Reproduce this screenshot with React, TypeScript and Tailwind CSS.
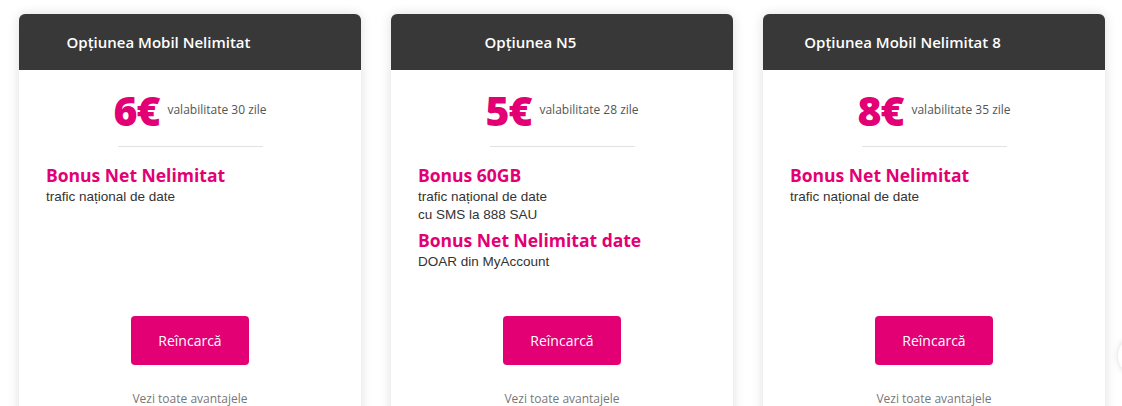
const offers = [
  {
    title: 'Opțiunea Mobil Nelimitat',
    price: '6€',
    validity: 'valabilitate 30 zile',
    bonuses: [{ name: 'Bonus Net Nelimitat', lines: ['trafic național de date'] }],
  },
  {
    title: 'Opțiunea N5',
    price: '5€',
    validity: 'valabilitate 28 zile',
    bonuses: [
      { name: 'Bonus 60GB', lines: ['trafic național de date', 'cu SMS la 888 SAU'] },
      { name: 'Bonus Net Nelimitat date', lines: ['DOAR din MyAccount'] },
    ],
  },
  {
    title: 'Opțiunea Mobil Nelimitat 8',
    price: '8€',
    validity: 'valabilitate 35 zile',
    bonuses: [{ name: 'Bonus Net Nelimitat', lines: ['trafic național de date'] }],
  },
];

const brand = "font-['Open_Sans',sans-serif]";

function OfferCard({ offer }: { offer: (typeof offers)[number] }) {
  return (
    <div className="w-[342px] h-[440px] shrink-0 bg-white rounded-t-[6px] overflow-hidden shadow-[0_0_12px_rgba(0,0,0,0.13)]">
      <div className={`h-[56px] bg-[#383838] flex items-center justify-center pr-[63px] text-white text-[15px] font-semibold ${brand}`}>
        {offer.title}
      </div>
      <div className="px-[27px] pt-[18px]">
        <div className="flex items-center justify-center gap-[8px] h-[44px]">
          <span className={`text-[#e20074] text-[41px] leading-none font-extrabold tracking-[-1px] ${brand}`}>
            {offer.price}
          </span>
          <span className={`text-[#555] text-[12px] ${brand}`}>{offer.validity}</span>
        </div>
        <div className="mx-auto mt-[14px] w-[145px] h-px bg-[#e2e2e2]" />
        <div className="h-[169px] pt-[15px] flex flex-col gap-[3px]">
          {offer.bonuses.map((b) => (
            <div key={b.name}>
              <div className={`text-[#e20074] text-[17.5px] leading-[26px] font-bold ${brand}`}>{b.name}</div>
              {b.lines.map((l) => (
                <div key={l} className="text-[#333] text-[13.5px] leading-[18px] font-['Liberation_Sans',sans-serif]">
                  {l}
                </div>
              ))}
            </div>
          ))}
        </div>
        <button className={`block mx-auto w-[118px] h-[49px] rounded-[4px] bg-[#e20074] text-white text-[14px] font-medium ${brand}`}>
          Reîncarcă
        </button>
        <div className={`mt-[25px] text-center text-[#777] text-[12px] ${brand}`}>Vezi toate avantajele</div>
      </div>
    </div>
  );
}

export default function App() {
  return (
    <div className="relative w-[1122px] h-[406px] overflow-hidden bg-white">
      <div className="flex gap-[30px] pl-[19px] pt-[14px]">
        {offers.map((o) => (
          <OfferCard key={o.title} offer={o} />
        ))}
      </div>
      <div className="absolute left-[1118px] top-[336px] w-[40px] h-[40px] rounded-full bg-white shadow-[0_0_6px_rgba(0,0,0,0.15)]" />
    </div>
  );
}
